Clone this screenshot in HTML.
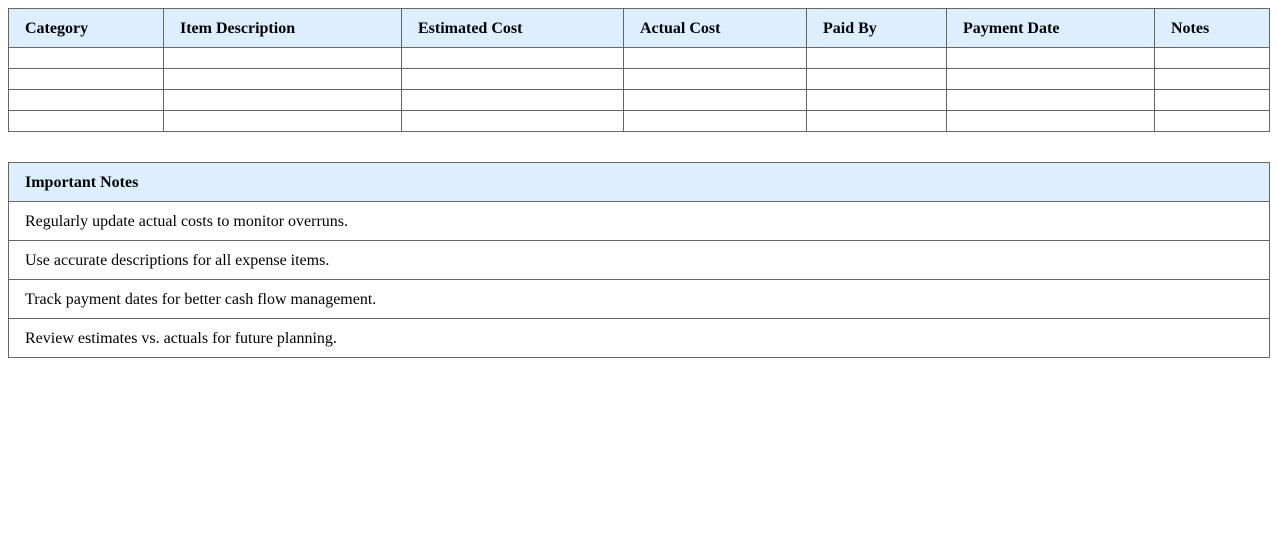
<!DOCTYPE html>
<html><head><style>
body{margin:0;background:#fff;font-family:"Liberation Serif",serif;font-size:16px;color:#000}
table{position:absolute;left:8px;border-collapse:collapse;table-layout:fixed;width:1262px}
td,th{border:1px solid #666;padding:1px 16px 0;text-align:left;white-space:nowrap;line-height:18px}
th{background:#ddeeff;font-weight:bold}
#t1{top:8px;width:1261px}
#t1 th{height:37px}
#t1 td{height:20px;padding:0}
#t2{top:162px}
#t2 th,#t2 td{height:37px}
</style></head><body>
<table id="t1">
<colgroup><col style="width:155px"><col style="width:238px"><col style="width:222px"><col style="width:183px"><col style="width:140px"><col style="width:208px"><col style="width:115px"></colgroup>
<tr><th>Category</th><th>Item Description</th><th>Estimated Cost</th><th>Actual Cost</th><th>Paid By</th><th>Payment Date</th><th>Notes</th></tr>
<tr><td></td><td></td><td></td><td></td><td></td><td></td><td></td></tr>
<tr><td></td><td></td><td></td><td></td><td></td><td></td><td></td></tr>
<tr><td></td><td></td><td></td><td></td><td></td><td></td><td></td></tr>
<tr><td></td><td></td><td></td><td></td><td></td><td></td><td></td></tr>
</table>
<table id="t2">
<tr><th>Important Notes</th></tr>
<tr><td>Regularly update actual costs to monitor overruns.</td></tr>
<tr><td>Use accurate descriptions for all expense items.</td></tr>
<tr><td>Track payment dates for better cash flow management.</td></tr>
<tr><td>Review estimates vs. actuals for future planning.</td></tr>
</table>
</body></html>
